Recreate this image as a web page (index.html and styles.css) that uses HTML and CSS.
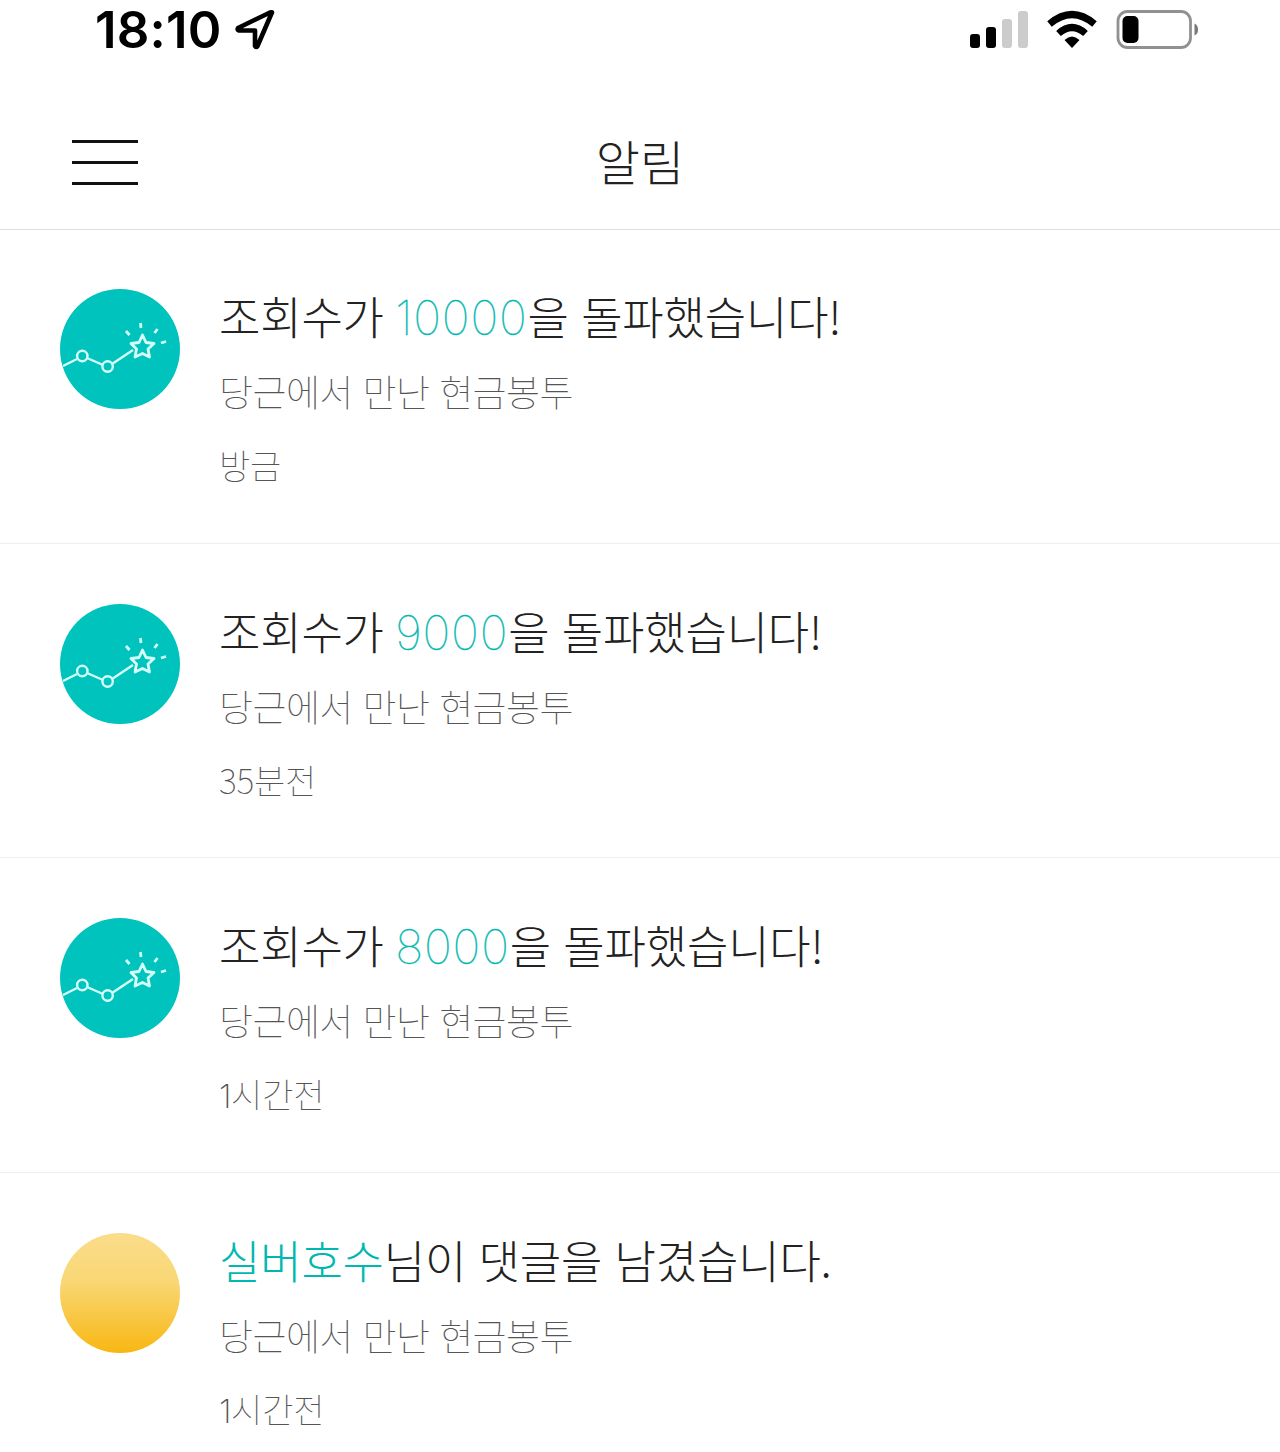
FILE: index.html
```html
<!DOCTYPE html>
<html lang="ko">
	<head>
		<meta charset="UTF-8">
		<meta name="viewport" content="width=device-width, initial-scale=1">
		<title>알림</title>
		<link rel="stylesheet" href="styles.css">
	</head>
	<body>
		<svg width="0" height="0" class="defs" aria-hidden="true">
			<symbol id="milestone" viewBox="0 0 120 120">
				<g fill="none" stroke="#d5fffb" stroke-width="2.4">
					<path d="M3 77 17 70M27 69 43 76M52 75 73 61"/>
					<circle cx="22.300" cy="67" r="5.200"/>
					<circle cx="47.600" cy="77.500" r="5.200"/>
					<path stroke-width="2.800" stroke-linejoin="round" d="M82.500 46 86 53.500 94 54.500 88 60 89.500 68 82.500 64.500 75 68 76.500 60 71 54.500 79 53.500Z"/>
					<path stroke-width="2.800" d="M80.500 34 81 39M66 42 69.500 46M97.500 40 94.500 44M101 54 106 52.500"/>
				</g>
			</symbol>
		</svg>

		<div class="status">
			<span class="clock">18:10</span>
			<svg class="location" width="42" height="42" viewBox="0 0 42 42"><path d="M36.500 5.500Q38 3.500 35 4.500L3 20Q2 22 4 22.500H20V38Q21 40 22.500 38Z" fill="none" stroke="#000" stroke-width="4.600" stroke-linejoin="round"/></svg>
			<svg class="signals" width="232" height="42" viewBox="966 8 232 42">
				<rect x="970" y="34" width="10" height="14" rx="3"/>
				<rect x="986" y="27" width="10" height="21" rx="3"/>
				<rect x="1002" y="19" width="10" height="29" rx="3" fill="#ccc"/>
				<rect x="1018" y="11" width="10" height="37" rx="3" fill="#ccc"/>
				<g fill="none" stroke="#000" stroke-width="7">
					<path d="M1049.500 24Q1072 5 1094.500 24M1058.500 33.500Q1072 21.500 1085.500 33.500"/>
				</g>
				<path d="M1064.500 40Q1072 33 1079.500 40L1072 48Z"/>
				<rect x="1118" y="11.500" width="72.500" height="36" rx="9.500" fill="none" stroke="#919191" stroke-width="2.800"/>
				<rect x="1122.500" y="16" width="16" height="27" rx="5"/>
				<path d="M1194.500 23.500Q1198 25 1198 29.500T1194.500 35.500Z" fill="#777"/>
			</svg>
		</div>

		<header class="header">
			<button class="menu" aria-label="메뉴"><i></i><i></i><i></i></button>
			<h1 class="title">알림</h1>
		</header>

		<ul class="list">
			<li class="item">
				<svg class="avatar"><use href="#milestone"/></svg>
				<div class="body">
					<p class="message">조회수가 <em class="num">10000</em>을 돌파했습니다!</p>
					<p class="post">당근에서 만난 현금봉투</p>
					<p class="time">방금</p>
				</div>
			</li>
			<li class="item">
				<svg class="avatar"><use href="#milestone"/></svg>
				<div class="body">
					<p class="message">조회수가 <em class="num">9000</em>을 돌파했습니다!</p>
					<p class="post">당근에서 만난 현금봉투</p>
					<p class="time">35분전</p>
				</div>
			</li>
			<li class="item">
				<svg class="avatar"><use href="#milestone"/></svg>
				<div class="body">
					<p class="message">조회수가 <em class="num">8000</em>을 돌파했습니다!</p>
					<p class="post">당근에서 만난 현금봉투</p>
					<p class="time"><span class="hour">1</span>시간전</p>
				</div>
			</li>
			<li class="item">
				<span class="avatar user"></span>
				<div class="body">
					<p class="message"><em>실버호수</em>님이 댓글을 남겼습니다.</p>
					<p class="post">당근에서 만난 현금봉투</p>
					<p class="time"><span class="hour">1</span>시간전</p>
				</div>
			</li>
		</ul>
	</body>
</html>
```

FILE: styles.css
```css
* {
	box-sizing: border-box;
}
body {
	margin: 0;
	height: 1452px;
	overflow: hidden;
	background: #fff;
	color: #222;
	font-family: "Noto Sans CJK KR", sans-serif;
	font-weight: 100;
}
p, h1, ul {
	margin: 0;
	padding: 0;
}
.defs {
	display: none;
}
.status {
	display: flex;
	height: 96px;
	padding: 8px 82px 0 95px;
}
.clock {
	width: 140px;
	color: #000;
	font: 600 51px/44px Inter, sans-serif;
	letter-spacing: 0.2px;
}
.signals {
	margin-left: auto;
}
.header {
	display: grid;
	grid-template-columns: 1fr auto 1fr;
	align-items: center;
	height: 134px;
	padding: 0 72px;
	border-bottom: 1px solid #ddd;
}
.menu {
	display: flex;
	flex-direction: column;
	gap: 18px;
	width: 66px;
	padding: 0;
	border: 0;
	background: none;
}
.menu i {
	width: 100%;
	height: 3px;
	background: #111;
}
.title {
	padding-bottom: 6px;
	font-size: 48px;
	font-weight: 300;
	line-height: 60px;
}
.list {
	list-style: none;
}
.item {
	display: flex;
	gap: 39px;
	height: 314px;
	padding: 60px 60px 0;
	border-bottom: 1px solid #eee;
}
.item:first-child {
	padding-top: 59px;
}
.item:nth-child(3) {
	height: 315px;
}
.avatar {
	flex: none;
	width: 120px;
	height: 120px;
	border-radius: 50%;
	background: #00c3bd;
}
.user {
	background: linear-gradient(#fadd8b, #f9d775 40%, #f8b712);
}
.body {
	margin-top: -1px;
}
.message {
	height: 56px;
	font-size: 45px;
	font-weight: 300;
	line-height: 56px;
	letter-spacing: -0.2px;
	white-space: nowrap;
}
.message em {
	color: #00b8b0;
	font-style: normal;
}
.message .num {
	margin-left: -1px;
	font-family: Inter, sans-serif;
	font-size: 47px;
	font-weight: 100;
	letter-spacing: 0.800px;
	-webkit-text-stroke: 0.4px #00b8b0;
}
.post {
	margin-top: 20px;
	color: #555;
	font-size: 37px;
	line-height: 54px;
	letter-spacing: -0.600px;
}
.time {
	margin-top: 22px;
	color: #555;
	font-size: 34px;
	line-height: 50px;
	letter-spacing: -0.200px;
}
.hour {
	font-family: Inter, sans-serif;
	font-size: 33px;
	font-weight: 200;
	letter-spacing: -0.5px;
}
```
